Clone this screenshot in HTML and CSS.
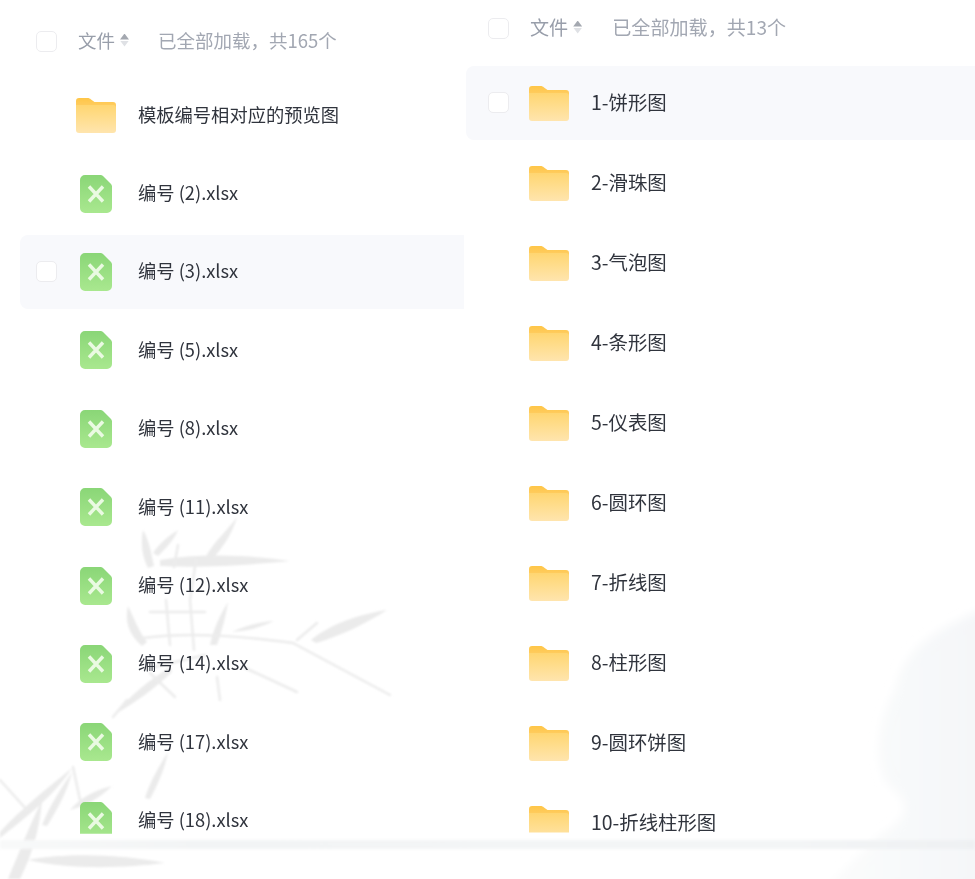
FILE: index.html
```html
<!DOCTYPE html>
<html lang="zh-CN">
<head>
    <meta charset="utf-8">
    <title>文件列表</title>
    <link rel="stylesheet" href="styles.css">
</head>
<body>
    <!-- 背景水墨 -->
    <svg class="ink" width="975" height="879" viewBox="0 0 975 879">
        <defs>
            <linearGradient id="mountain" x1="1" y1="0" x2="0" y2="0">
                <stop offset="0" stop-color="#f4f6f8"/>
                <stop offset="1" stop-color="#fbfcfc"/>
            </linearGradient>
            <filter id="soft-wide" x="-20%" y="-20%" width="140%" height="140%">
                <feGaussianBlur stdDeviation="5"/>
            </filter>
            <filter id="soft" x="-5%" y="-5%" width="110%" height="110%">
                <feGaussianBlur stdDeviation="1.200"/>
            </filter>
        </defs>
        <path fill="url(#mountain)" filter="url(#soft-wide)" d="M985 608 C950 625 905 640 895 690 C878 720 872 760 888 785 C908 800 915 815 880 835 L825 889 L985 889 Z"/>
        <g filter="url(#soft)">
            <!-- 竹叶 -->
            <g fill="#ebebeb">
                <path d="M237 517 C228 530 215 540 205 558 L211 561 C222 548 232 535 237 517Z"/>
                <path d="M143 530 C140 545 143 558 148 568 L154 566 C151 552 149 540 143 530Z"/>
                <path d="M178 530 C168 536 158 545 153 553 L158 556 C166 548 174 540 178 530Z"/>
                <path d="M160 560 C200 553 250 555 290 561 C250 565 200 568 160 566Z"/>
                <path d="M128 606 C124 622 130 636 142 646 L147 642 C138 630 134 618 128 606Z"/>
                <path d="M228 602 C220 615 213 630 210 645 L217 645 C222 630 226 616 228 602Z"/>
                <path d="M387 610 C360 614 330 624 311 640 L316 643 C340 636 365 624 387 610Z"/>
                <path d="M170 667 C150 680 130 695 115 714 C135 703 155 688 172 672Z"/>
                <path d="M274 621 C258 622 245 626 232 632 C248 631 262 627 274 621Z"/>
                <path d="M72 768 C45 790 20 810 0 832 L0 838 C25 818 55 795 72 768Z"/>
                <path d="M72 772 C60 790 50 805 42 825 L47 826 C58 808 68 790 72 772Z"/>
                <path d="M112 786 C95 790 80 798 70 810 C85 806 100 798 112 786Z"/>
                <path d="M168 752 C158 768 150 782 145 798 L150 799 C158 784 165 768 168 752Z"/>
                <path d="M42 800 C30 825 20 850 8 879 L20 879 C32 855 40 828 42 800Z"/>
                <path d="M28 860 C70 852 125 855 165 863 C125 868 70 870 28 860Z"/>
            </g>
            <!-- 枝条 -->
            <g fill="none" stroke="#ececec" stroke-width="2.500" stroke-linecap="round">
                <path d="M143 638 C190 632 240 636 293 643"/>
                <path d="M293 643 L390 695"/>
                <path d="M317 623 L297 640"/>
                <path d="M243 667 L297 692"/>
                <path d="M217 677 L220 700"/>
                <path d="M150 673 L175 697"/>
                <path d="M166 600 L170 645"/>
                <path d="M190 600 L194 650"/>
                <path d="M150 612 L205 612"/>
                <path d="M205 655 L150 668"/>
                <path d="M127 700 L113 717"/>
                <path d="M196 560 L190 600"/>
                <path d="M178 545 L174 567"/>
                <path d="M73 767 L80 800"/>
                <path d="M0 780 L27 810"/>
            </g>
        </g>
    </svg>

    <svg class="sprites" width="0" height="0">
        <defs>
            <linearGradient id="folder-back" x1="0" y1="0" x2="0" y2="1">
                <stop offset="0" stop-color="#ffc647"/>
                <stop offset="1" stop-color="#ffd070"/>
            </linearGradient>
            <linearGradient id="folder-front" x1="0" y1="0" x2="0" y2="1">
                <stop offset="0" stop-color="#ffd671"/>
                <stop offset="1" stop-color="#ffe5ae"/>
            </linearGradient>
            <linearGradient id="sheet" x1="0" y1="0" x2="0" y2="1">
                <stop offset="0" stop-color="#8ad677"/>
                <stop offset="1" stop-color="#a9e88f"/>
            </linearGradient>
            <symbol id="folder" viewBox="0 0 40 35">
                <path fill="url(#folder-back)" d="M3 0h8.500c1.500 0 2.500.5 3.500 1.500L18.500 4H37a3 3 0 0 1 3 3v6H0V3a3 3 0 0 1 3-3Z"/>
                <path fill="url(#folder-front)" d="M0 7h37a3 3 0 0 1 3 3v22a3 3 0 0 1-3 3H3a3 3 0 0 1-3-3Z"/>
            </symbol>
            <symbol id="xlsx" viewBox="0 0 32 38">
                <path fill="url(#sheet)" d="M5 0h15.500c1 0 1.800.4 2.500 1l8 8c.7.700 1 1.500 1 2.500V33a5 5 0 0 1-5 5H5a5 5 0 0 1-5-5V5a5 5 0 0 1 5-5Z"/>
                <path stroke="#eafae2" stroke-width="3.400" d="M9 11.500l14 15M23 11.500l-14 15"/>
            </symbol>
        </defs>
    </svg>

    <div class="panes">
        <section class="pane pane-left">
            <div class="list-head">
                <span class="check"></span>
                <span class="col-name">文件</span>
                <span class="sort"><i class="up"></i><i class="down"></i></span>
                <span class="loaded">已全部加载，共165个</span>
            </div>
            <div class="list">
                <div class="row"><svg class="ic-folder"><use href="#folder"/></svg><span class="name">模板编号相对应的预览图</span></div>
                <div class="row"><svg class="ic-xlsx"><use href="#xlsx"/></svg><span class="name">编号 (2).xlsx</span></div>
                <div class="row active"><span class="check"></span><svg class="ic-xlsx"><use href="#xlsx"/></svg><span class="name">编号 (3).xlsx</span></div>
                <div class="row"><svg class="ic-xlsx"><use href="#xlsx"/></svg><span class="name">编号 (5).xlsx</span></div>
                <div class="row"><svg class="ic-xlsx"><use href="#xlsx"/></svg><span class="name">编号 (8).xlsx</span></div>
                <div class="row"><svg class="ic-xlsx"><use href="#xlsx"/></svg><span class="name">编号 (11).xlsx</span></div>
                <div class="row"><svg class="ic-xlsx"><use href="#xlsx"/></svg><span class="name">编号 (12).xlsx</span></div>
                <div class="row"><svg class="ic-xlsx"><use href="#xlsx"/></svg><span class="name">编号 (14).xlsx</span></div>
                <div class="row"><svg class="ic-xlsx"><use href="#xlsx"/></svg><span class="name">编号 (17).xlsx</span></div>
                <div class="row"><svg class="ic-xlsx"><use href="#xlsx"/></svg><span class="name">编号 (18).xlsx</span></div>
            </div>
        </section>

        <section class="pane pane-right">
            <div class="list-head">
                <span class="check"></span>
                <span class="col-name">文件</span>
                <span class="sort"><i class="up"></i><i class="down"></i></span>
                <span class="loaded">已全部加载，共13个</span>
            </div>
            <div class="list">
                <div class="row active"><span class="check"></span><svg class="ic-folder"><use href="#folder"/></svg><span class="name">1-饼形图</span></div>
                <div class="row"><svg class="ic-folder"><use href="#folder"/></svg><span class="name">2-滑珠图</span></div>
                <div class="row"><svg class="ic-folder"><use href="#folder"/></svg><span class="name">3-气泡图</span></div>
                <div class="row"><svg class="ic-folder"><use href="#folder"/></svg><span class="name">4-条形图</span></div>
                <div class="row"><svg class="ic-folder"><use href="#folder"/></svg><span class="name">5-仪表图</span></div>
                <div class="row"><svg class="ic-folder"><use href="#folder"/></svg><span class="name">6-圆环图</span></div>
                <div class="row"><svg class="ic-folder"><use href="#folder"/></svg><span class="name">7-折线图</span></div>
                <div class="row"><svg class="ic-folder"><use href="#folder"/></svg><span class="name">8-柱形图</span></div>
                <div class="row"><svg class="ic-folder"><use href="#folder"/></svg><span class="name">9-圆环饼图</span></div>
                <div class="row"><svg class="ic-folder"><use href="#folder"/></svg><span class="name">10-折线柱形图</span></div>
            </div>
        </section>
    </div>

    <div class="bottom-band"></div>
</body>
</html>
```

FILE: styles.css
```css
html, body {
    margin: 0;
    height: 879px;
    overflow: hidden;
}

body {
    font-family: "Noto Sans CJK SC", "Noto Sans", sans-serif;
    background: #fff;
    color: #30343d;
}

.ink {
    position: absolute;
    left: 0;
    top: 0;
}

.sprites {
    position: absolute;
}

.panes {
    position: relative;
    display: flex;
    height: 834px;
    filter: blur(0.3px);
}

.pane-left {
    width: 444px;
    margin-left: 20px;
    font-size: 18.3px;
    --row-h: 78.4px;
    --head-h: 70px;
    --head-top: 6px;
    --head-bottom: 0px;
    --head-size: 18.5px;
    --pad: 16px;
    --inset: 2.5px;
    --last-cut: 6px;
}

.pane-right {
    flex: 1;
    margin-left: 2px;
    font-size: 19.4px;
    --row-h: 80px;
    --head-h: 56px;
    --head-top: 0px;
    --head-bottom: 7px;
    --head-size: 19.1px;
    --pad: 22px;
    --inset: 3px;
    --last-cut: 8px;
}

.list-head {
    display: flex;
    align-items: center;
    box-sizing: border-box;
    height: var(--head-h);
    margin-top: var(--head-top);
    margin-bottom: var(--head-bottom);
    padding-left: var(--pad);
    font-size: var(--head-size);
    color: #989eaa;
}

.list-head > span:not(.check) {
    padding-bottom: 2px;
}

.list {
    display: flow-root;
}

.check {
    flex: none;
    box-sizing: border-box;
    width: 21px;
    height: 21px;
    border: 1.5px solid #ececef;
    border-radius: 5px;
    background: #fff;
}

.col-name {
    margin-left: 21px;
}

.sort {
    display: flex;
    flex-direction: column;
    gap: 1px;
    margin-left: 5px;
}

.sort i {
    display: block;
    width: 9px;
    height: 6px;
}

.sort .up {
    background: #a4a8b0;
    clip-path: polygon(50% 0, 100% 100%, 0 100%);
}

.sort .down {
    background: #dfe1e5;
    clip-path: polygon(0 0, 100% 0, 50% 100%);
}

.loaded {
    margin-left: 29px;
    color: #a2a7b2;
}

.pane-right .col-name {
    margin-left: 21px;
}

.pane-right .loaded {
    margin-left: 30px;
}

.row {
    position: relative;
    display: flex;
    align-items: center;
    height: var(--row-h);
}

.row.active {
    height: calc(var(--row-h) - 2 * var(--inset));
    margin: var(--inset) 0;
    background: #f8f9fc;
    border-radius: 8px 0 0 8px;
}

.row .check {
    position: absolute;
    left: var(--pad);
    top: 50%;
    margin-top: -11px;
}

.ic-folder {
    flex: none;
    width: 40px;
    height: 35px;
    margin-left: 56px;
}

.ic-xlsx {
    flex: none;
    width: 32px;
    height: 38px;
    margin-left: 60px;
    margin-right: 4px;
}

.pane-right .ic-folder {
    margin-left: 63px;
}

/* 最后一行的图标被列表底部裁掉 */
.row:last-child svg {
    clip-path: inset(0 0 var(--last-cut) 0);
}

.name {
    margin-left: 22px;
    padding-bottom: 3px;
    white-space: nowrap;
}

.bottom-band {
    position: absolute;
    left: 0;
    right: 0;
    top: 840px;
    height: 9px;
    background: linear-gradient(90deg, #f8f9f9, #f2f4f5 20%, #f3f5f6 80%, #eef0f2);
    filter: blur(1.5px);
}
```
